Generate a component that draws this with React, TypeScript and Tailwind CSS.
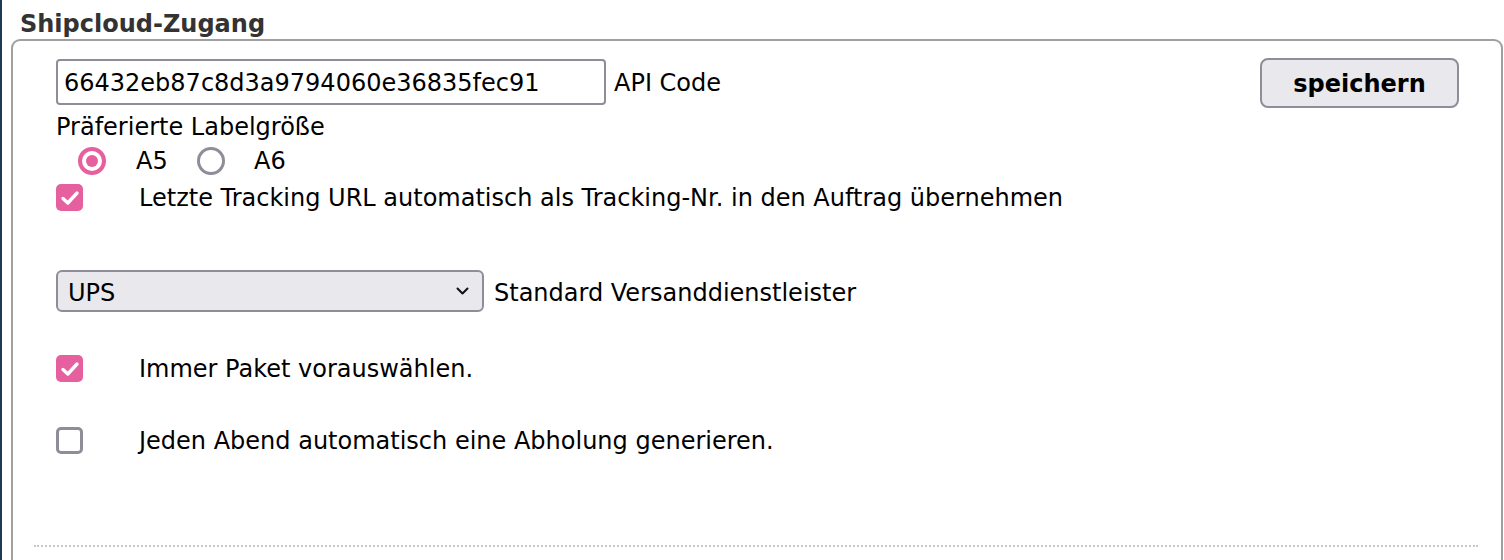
const font = { fontFamily: '"DejaVu Sans", Verdana, sans-serif' };

function Tick() {
  return (
    <svg width="20" height="16" viewBox="0 0 20 16" fill="none">
      <path d="M3 8.5 L7.8 13 L17 3" stroke="#fff" strokeWidth="3.4" strokeLinecap="round" strokeLinejoin="round" />
    </svg>
  );
}

function Checkbox({ checked }: { checked: boolean }) {
  return checked ? (
    <span className="flex h-[27px] w-[27px] shrink-0 items-center justify-center rounded-[5px] bg-[#e65f9e]">
      <Tick />
    </span>
  ) : (
    <span className="h-[27px] w-[27px] shrink-0 rounded-[5px] border-[3px] border-[#8f8e98] bg-white" />
  );
}

function Radio({ checked }: { checked: boolean }) {
  return checked ? (
    <span className="flex h-[28px] w-[28px] items-center justify-center rounded-full border-[4px] border-[#e65f9e] bg-white">
      <span className="h-[12px] w-[12px] rounded-full bg-[#e65f9e]" />
    </span>
  ) : (
    <span className="h-[28px] w-[28px] rounded-full border-[3px] border-[#8f8e98] bg-white" />
  );
}

export default function App() {
  return (
    <div
      className="h-[560px] w-[1504px] overflow-hidden border-l-2 border-[#1b3a55] bg-white text-[24px] leading-[28px] text-black"
      style={font}
    >
      {/* Legend */}
      <div className="pl-[18px] pt-[10px] font-bold text-[#333]">Shipcloud-Zugang</div>

      {/* Box */}
      <div className="ml-[9px] mt-[1px] h-[560px] w-[1492px] rounded-t-[9px] border-2 border-b-0 border-[#a0a0a0] pl-[43px] pr-[42px] pt-[18px]">
        <div className="flex items-start justify-between">
          <div className="flex items-center gap-[8px]">
            <div className="flex h-[46px] w-[550px] items-center rounded-[4px] border-2 border-[#8f8e98] px-[6px] pt-[1px]">
              66432eb87c8d3a9794060e36835fec91
            </div>
            <span className="pt-[2px]">API Code</span>
          </div>
          <button className="-mt-[1px] h-[50px] w-[199px] rounded-[8px] border-2 border-[#8f8e98] bg-[#e9e8ed] pt-[2px] font-bold">
            speichern
          </button>
        </div>

        <div className="mt-[5px]">Präferierte Labelgröße</div>

        <div className="mt-[6px] flex h-[28px] items-center pl-[22px]">
          <Radio checked />
          <span className="ml-[30px] w-[61px]">A5</span>
          <Radio checked={false} />
          <span className="ml-[29px]">A6</span>
        </div>

        <div className="mt-[9px] flex h-[27px] items-center">
          <Checkbox checked />
          <span className="ml-[56px]">
            Letzte Tracking URL automatisch als Tracking-Nr. in den Auftrag übernehmen
          </span>
        </div>

        <div className="mt-[59px] flex items-center gap-[10px]">
          <div className="flex h-[42px] w-[428px] items-center justify-between rounded-[6px] border-2 border-[#8f8e98] bg-[#e9e8ed] pl-[10px] pr-[13px]">
            <span className="pt-[3px]">UPS</span>
            <svg width="13" height="8" viewBox="0 0 13 8" fill="none">
              <path d="M1.5 1.5 L6.5 6.5 L11.5 1.5" stroke="#111" strokeWidth="2" strokeLinecap="round" strokeLinejoin="round" />
            </svg>
          </div>
          <span className="pt-[3px]">Standard Versanddienstleister</span>
        </div>

        <div className="mt-[43px] flex h-[27px] items-center">
          <Checkbox checked />
          <span className="ml-[56px]">Immer Paket vorauswählen.</span>
        </div>

        <div className="mt-[45px] flex h-[27px] items-center">
          <Checkbox checked={false} />
          <span className="ml-[56px]">Jeden Abend automatisch eine Abholung generieren.</span>
        </div>

        <div className="-ml-[22px] mt-[91px] w-[1444px] border-t-2 border-dotted border-[#c8c8c8]" />
      </div>
    </div>
  );
}
